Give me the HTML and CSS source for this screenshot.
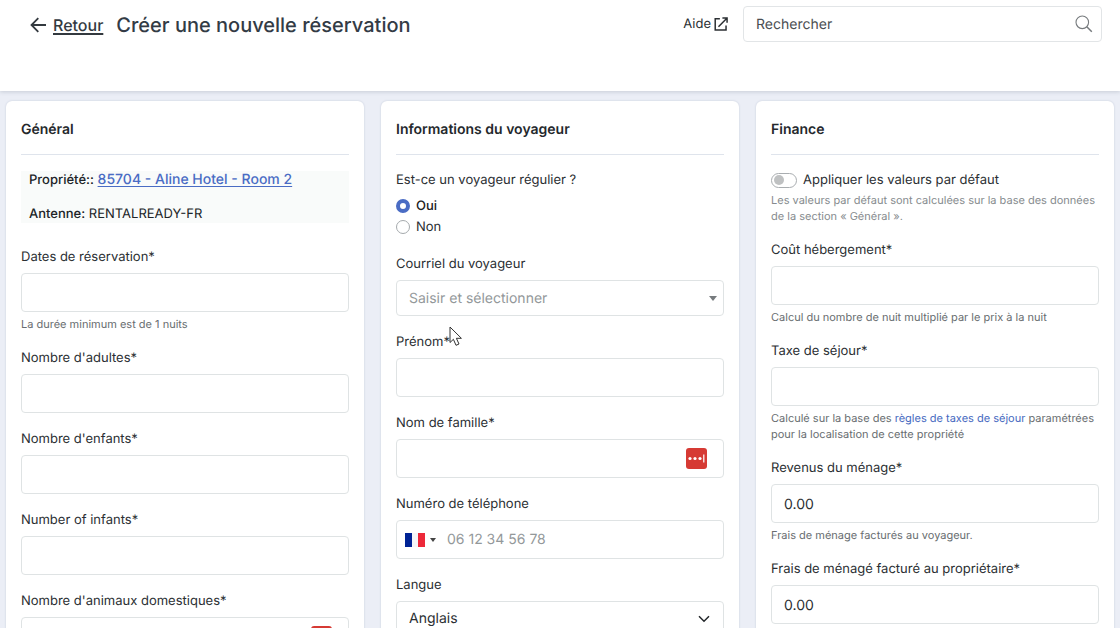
FILE: index.html
```html
<!DOCTYPE html>
<html lang="fr">
<head>
<meta charset="utf-8">
<title>Créer une nouvelle réservation</title>
<link rel="stylesheet" href="styles.css">
</head>
<body>
<div class="app">
  <header class="topbar">
    <a class="back" href="#">
      <svg class="back-icon" width="17" height="16" viewBox="0 0 17 16" fill="none" stroke="currentColor" stroke-width="1.8" aria-hidden="true"><path d="M16 8H1.500M8.300 1.200L1.500 8l6.800 6.800"/></svg>
      <span class="back-text">Retour</span>
    </a>
    <h1 class="page-title">Créer une nouvelle réservation</h1>
    <a class="help" href="#">Aide
      <svg width="14" height="14" viewBox="0 0 15 15" fill="none" stroke="currentColor" stroke-width="1.6" aria-hidden="true"><path d="M6.300 1.800H1.300v12h11.600V9M9 1.200h5v5M13.800 1.400L4.800 10.400"/></svg>
    </a>
    <div class="search">
      <input class="search-input" type="text" placeholder="Rechercher" aria-label="Rechercher">
      <svg width="18" height="18" viewBox="0 0 18 18" fill="none" stroke="#777b7e" stroke-width="1.1" aria-hidden="true"><circle cx="7.300" cy="7.300" r="6.300"/><path d="M11.800 11.800l5 5" stroke-width="1.500"/></svg>
    </div>
  </header>

  <main class="content">
    <section class="card">
      <h2 class="card-title">Général</h2>
      <div class="summary">
        <p class="summary-row"><span class="strong">Propriété::</span> <a class="property-link" href="#">85704 - Aline Hotel - Room 2</a></p>
        <p class="summary-row"><span class="strong">Antenne:</span> RENTALREADY-FR</p>
      </div>
      <div class="field">
        <label class="label" for="dates">Dates de réservation*</label>
        <input class="input" id="dates" type="text">
        <p class="hint">La durée minimum est de 1 nuits</p>
      </div>
      <div class="field">
        <label class="label" for="adults">Nombre d'adultes*</label>
        <input class="input" id="adults" type="text">
      </div>
      <div class="field">
        <label class="label" for="children">Nombre d'enfants*</label>
        <input class="input" id="children" type="text">
      </div>
      <div class="field">
        <label class="label" for="infants">Number of infants*</label>
        <input class="input" id="infants" type="text">
      </div>
      <div class="field">
        <label class="label" for="pets">Nombre d'animaux domestiques*</label>
        <div class="input input-group">
          <input class="bare" id="pets" type="text">
          <button class="autofill" type="button" aria-label="Remplissage automatique">
            <svg width="21" height="21" viewBox="0 0 21 21" aria-hidden="true"><rect width="21" height="21" rx="3" fill="#d63a34"/><g fill="#fff"><circle cx="4" cy="10.500" r="1.600"/><circle cx="9" cy="10.500" r="1.600"/><circle cx="14" cy="10.500" r="1.600"/><rect x="17.200" y="6.500" width="1.200" height="8"/></g></svg>
          </button>
        </div>
      </div>
    </section>

    <section class="card">
      <h2 class="card-title">Informations du voyageur</h2>
      <fieldset class="choices">
        <legend class="legend">Est-ce un voyageur régulier ?</legend>
        <label class="choice"><input class="radio" type="radio" name="regular" checked><span>Oui</span></label>
        <label class="choice"><input class="radio" type="radio" name="regular"><span>Non</span></label>
      </fieldset>
      <div class="field">
        <label class="label" for="email">Courriel du voyageur</label>
        <div class="input input-group combo">
          <input class="bare" id="email" type="text" placeholder="Saisir et sélectionner">
          <svg width="8" height="5" viewBox="0 0 8 5" aria-hidden="true"><path d="M0 0h8L4 5z" fill="#777b7e"/></svg>
        </div>
      </div>
      <div class="field">
        <label class="label" for="firstname">Prénom*</label>
        <input class="input" id="firstname" type="text">
      </div>
      <div class="field">
        <label class="label" for="lastname">Nom de famille*</label>
        <div class="input input-group">
          <input class="bare" id="lastname" type="text">
          <button class="autofill" type="button" aria-label="Remplissage automatique">
            <svg width="21" height="21" viewBox="0 0 21 21" aria-hidden="true"><rect width="21" height="21" rx="3" fill="#d63a34"/><g fill="#fff"><circle cx="4" cy="10.500" r="1.600"/><circle cx="9" cy="10.500" r="1.600"/><circle cx="14" cy="10.500" r="1.600"/><rect x="17.200" y="6.500" width="1.200" height="8"/></g></svg>
          </button>
        </div>
      </div>
      <div class="field">
        <label class="label" for="phone">Numéro de téléphone</label>
        <div class="input input-group phone">
          <button class="country" type="button" aria-label="France">
            <svg width="20" height="14" viewBox="0 0 20 14" aria-hidden="true"><rect width="20" height="14" fill="#f5f6f8"/><rect width="7" height="14" fill="#002395"/><rect x="13" width="7" height="14" fill="#ed2939"/></svg>
            <svg width="6" height="4" viewBox="0 0 6 4" aria-hidden="true"><path d="M0 0h6L3 4z" fill="#444"/></svg>
          </button>
          <input class="bare" id="phone" type="tel" placeholder="06 12 34 56 78">
        </div>
      </div>
      <div class="field">
        <label class="label" for="language">Langue</label>
        <div class="select-wrap">
          <select class="input select" id="language"><option>Anglais</option><option>Français</option></select>
          <svg class="chevron" width="12" height="8" viewBox="0 0 12 8" fill="none" stroke="#222629" stroke-width="1.500" aria-hidden="true"><path d="M1 1.200l5 5 5-5"/></svg>
        </div>
      </div>
    </section>

    <section class="card">
      <h2 class="card-title">Finance</h2>
      <div class="field">
        <label class="toggle-row"><input class="toggle" type="checkbox" role="switch"><span>Appliquer les valeurs par défaut</span></label>
        <p class="hint hint-light">Les valeurs par défaut sont calculées sur la base des données de la section « Général ».</p>
      </div>
      <div class="field">
        <label class="label" for="cost">Coût hébergement*</label>
        <input class="input" id="cost" type="text">
        <p class="hint">Calcul du nombre de nuit multiplié par le prix à la nuit</p>
      </div>
      <div class="field">
        <label class="label" for="tax">Taxe de séjour*</label>
        <input class="input" id="tax" type="text">
        <p class="hint">Calculé sur la base des <a class="hint-link" href="#">règles de taxes de séjour</a> paramétrées pour la localisation de cette propriété</p>
      </div>
      <div class="field">
        <label class="label" for="cleaning">Revenus du ménage*</label>
        <input class="input" id="cleaning" type="text" value="0.00">
        <p class="hint">Frais de ménage facturés au voyageur.</p>
      </div>
      <div class="field">
        <label class="label" for="owner">Frais de ménagé facturé au propriétaire*</label>
        <input class="input" id="owner" type="text" value="0.00">
      </div>
    </section>
  </main>

  <svg class="pointer" width="14" height="21" viewBox="0 0 14 21" aria-hidden="true"><path d="M1 1v15.500l3.400-3.200 2.600 6 3-1.300-2.600-5.700h5z" fill="#fff" stroke="#333" stroke-width="1"/></svg>
</div>
</body>
</html>
```
FILE: styles.css
```css
* {
  box-sizing: border-box;
}

body {
  margin: 0;
  font-family: Inter, "Liberation Sans", sans-serif;
  font-size: 13px;
  line-height: 18px;
  text-rendering: geometricPrecision;
  color: #2b2f33;
  background: #ebeef6;
}

h1, h2, p {
  margin: 0;
}

input, select, button {
  font: inherit;
  color: inherit;
  text-rendering: inherit;
}

.app {
  position: relative;
  display: flex;
  flex-direction: column;
  height: 100vh;
  overflow: hidden;
}

.topbar {
  position: relative;
  flex: none;
  display: flex;
  align-items: flex-start;
  padding: 6px 18px 47px 30px;
  background: #fff;
  box-shadow: 0 1px 4px rgba(60, 70, 90, 0.2);
}

.back {
  display: flex;
  align-items: center;
  gap: 6px;
  height: 38px;
  font-size: 16px;
  font-weight: 500;
  color: #33393f;
  text-decoration: none;
}

.back-text {
  text-decoration: underline;
  text-underline-offset: 2px;
  text-decoration-thickness: 2px;
}

.page-title {
  margin-left: 13px;
  font-size: 20px;
  line-height: 38px;
  font-weight: 500;
  color: #333b45;
}

.help {
  display: flex;
  align-items: center;
  gap: 3px;
  height: 36px;
  margin-left: auto;
  margin-right: 15px;
  color: #2b2f33;
  text-decoration: none;
}

.search {
  display: flex;
  align-items: center;
  width: 32%;
  max-width: 359px;
  flex: 1 0 auto;
  height: 36px;
  padding: 0 8px 0 12px;
  border: 1px solid #e2e5e7;
  border-radius: 4px;
}

.search-input {
  flex: 1;
  min-width: 0;
  padding: 2px 0 0;
  border: 0;
  outline: 0;
  font-size: 14px;
  background: transparent;
}

.search-input::placeholder {
  color: #4a4e52;
  opacity: 1;
}

.content {
  flex: 1;
  min-height: 0;
  display: grid;
  grid-template-columns: repeat(3, minmax(0, 1fr));
  gap: 17px;
  padding: 10px 6px 0;
  overflow: auto;
  scrollbar-width: none;
}

.card {
  display: flex;
  flex-direction: column;
  gap: 16px;
  height: max-content;
  min-height: 100%;
  padding: 16px 15px 15px;
  background: #fff;
  border-radius: 6px;
  box-shadow: 0 0 2px rgba(70, 90, 130, 0.25);
}

.card-title {
  padding-bottom: 12px;
  border-bottom: 1px solid #dfe4ec;
  font-size: 14px;
  line-height: 25px;
  font-weight: 600;
  color: #24282c;
}

.summary {
  display: flex;
  flex-direction: column;
  gap: 16px;
  margin-bottom: 8px;
  padding: 0 8px;
  background: #f9fbfa;
  color: #202427;
}

.strong {
  font-weight: 500;
}

.property-link {
  font-size: 14px;
  font-weight: 500;
  color: #4a6cc4;
  text-underline-offset: 2px;
}

.field {
  display: flex;
  flex-direction: column;
}

.label {
  margin-bottom: 7px;
  padding-top: 1px;
}

.input {
  width: 100%;
  height: 39px;
  padding: 2px 12px 0;
  border: 1px solid #dfe3e4;
  border-radius: 4px;
  outline: 0;
  font-size: 14px;
  background: #fff;
}

.input-group {
  display: flex;
  align-items: center;
  padding: 0 16px 0 12px;
}

.bare {
  flex: 1;
  min-width: 0;
  padding: 0;
  border: 0;
  outline: 0;
  background: transparent;
}

.bare::placeholder {
  color: #93989a;
  opacity: 1;
}

.combo {
  height: 36px;
  padding: 1px 6px 0 12px;
}

.autofill {
  display: flex;
  padding: 0;
  border: 0;
  background: none;
}

.phone {
  padding-left: 8px;
}

.country {
  display: flex;
  align-items: center;
  gap: 5px;
  margin-right: 11px;
  padding: 0;
  border: 0;
  background: none;
}

.hint {
  margin-top: 4px;
  font-size: 11px;
  line-height: 16px;
  color: #686d70;
}

.hint-light {
  margin-top: 3px;
  color: #868b8e;
}

.hint-link {
  color: #4468c0;
  text-decoration: none;
}

.choices {
  min-width: 0;
  margin: 0 0 1px;
  padding: 0;
  border: 0;
}

.legend {
  margin-bottom: 6px;
  padding: 0;
}

.choice {
  display: flex;
  align-items: center;
  gap: 6px;
  height: 21px;
}

.choice:has(:checked) {
  font-weight: 500;
  color: #1c2023;
}

.radio {
  appearance: none;
  width: 14px;
  height: 14px;
  margin: 0;
  border: 1px solid #a5aaad;
  border-radius: 50%;
  background: #fff;
}

.radio:checked {
  border: 4px solid #4a6cc4;
}

.toggle-row {
  display: flex;
  align-items: center;
  gap: 6px;
}

.toggle {
  appearance: none;
  display: flex;
  align-items: center;
  width: 26px;
  height: 15px;
  margin: 0;
  padding: 0 2px;
  border: 1px solid #a9adb0;
  border-radius: 8px;
  background: #fff;
}

.toggle::before {
  content: "";
  width: 10px;
  height: 10px;
  border-radius: 50%;
  background: #bfc1c2;
}

.toggle:checked {
  justify-content: flex-end;
}

.select-wrap {
  position: relative;
}

.select {
  display: block;
  height: 36px;
  padding-top: 0;
  appearance: none;
}

.chevron {
  position: absolute;
  top: 14px;
  right: 14px;
  pointer-events: none;
}

.pointer {
  position: absolute;
  top: 326px;
  left: 449px;
  pointer-events: none;
}
```
